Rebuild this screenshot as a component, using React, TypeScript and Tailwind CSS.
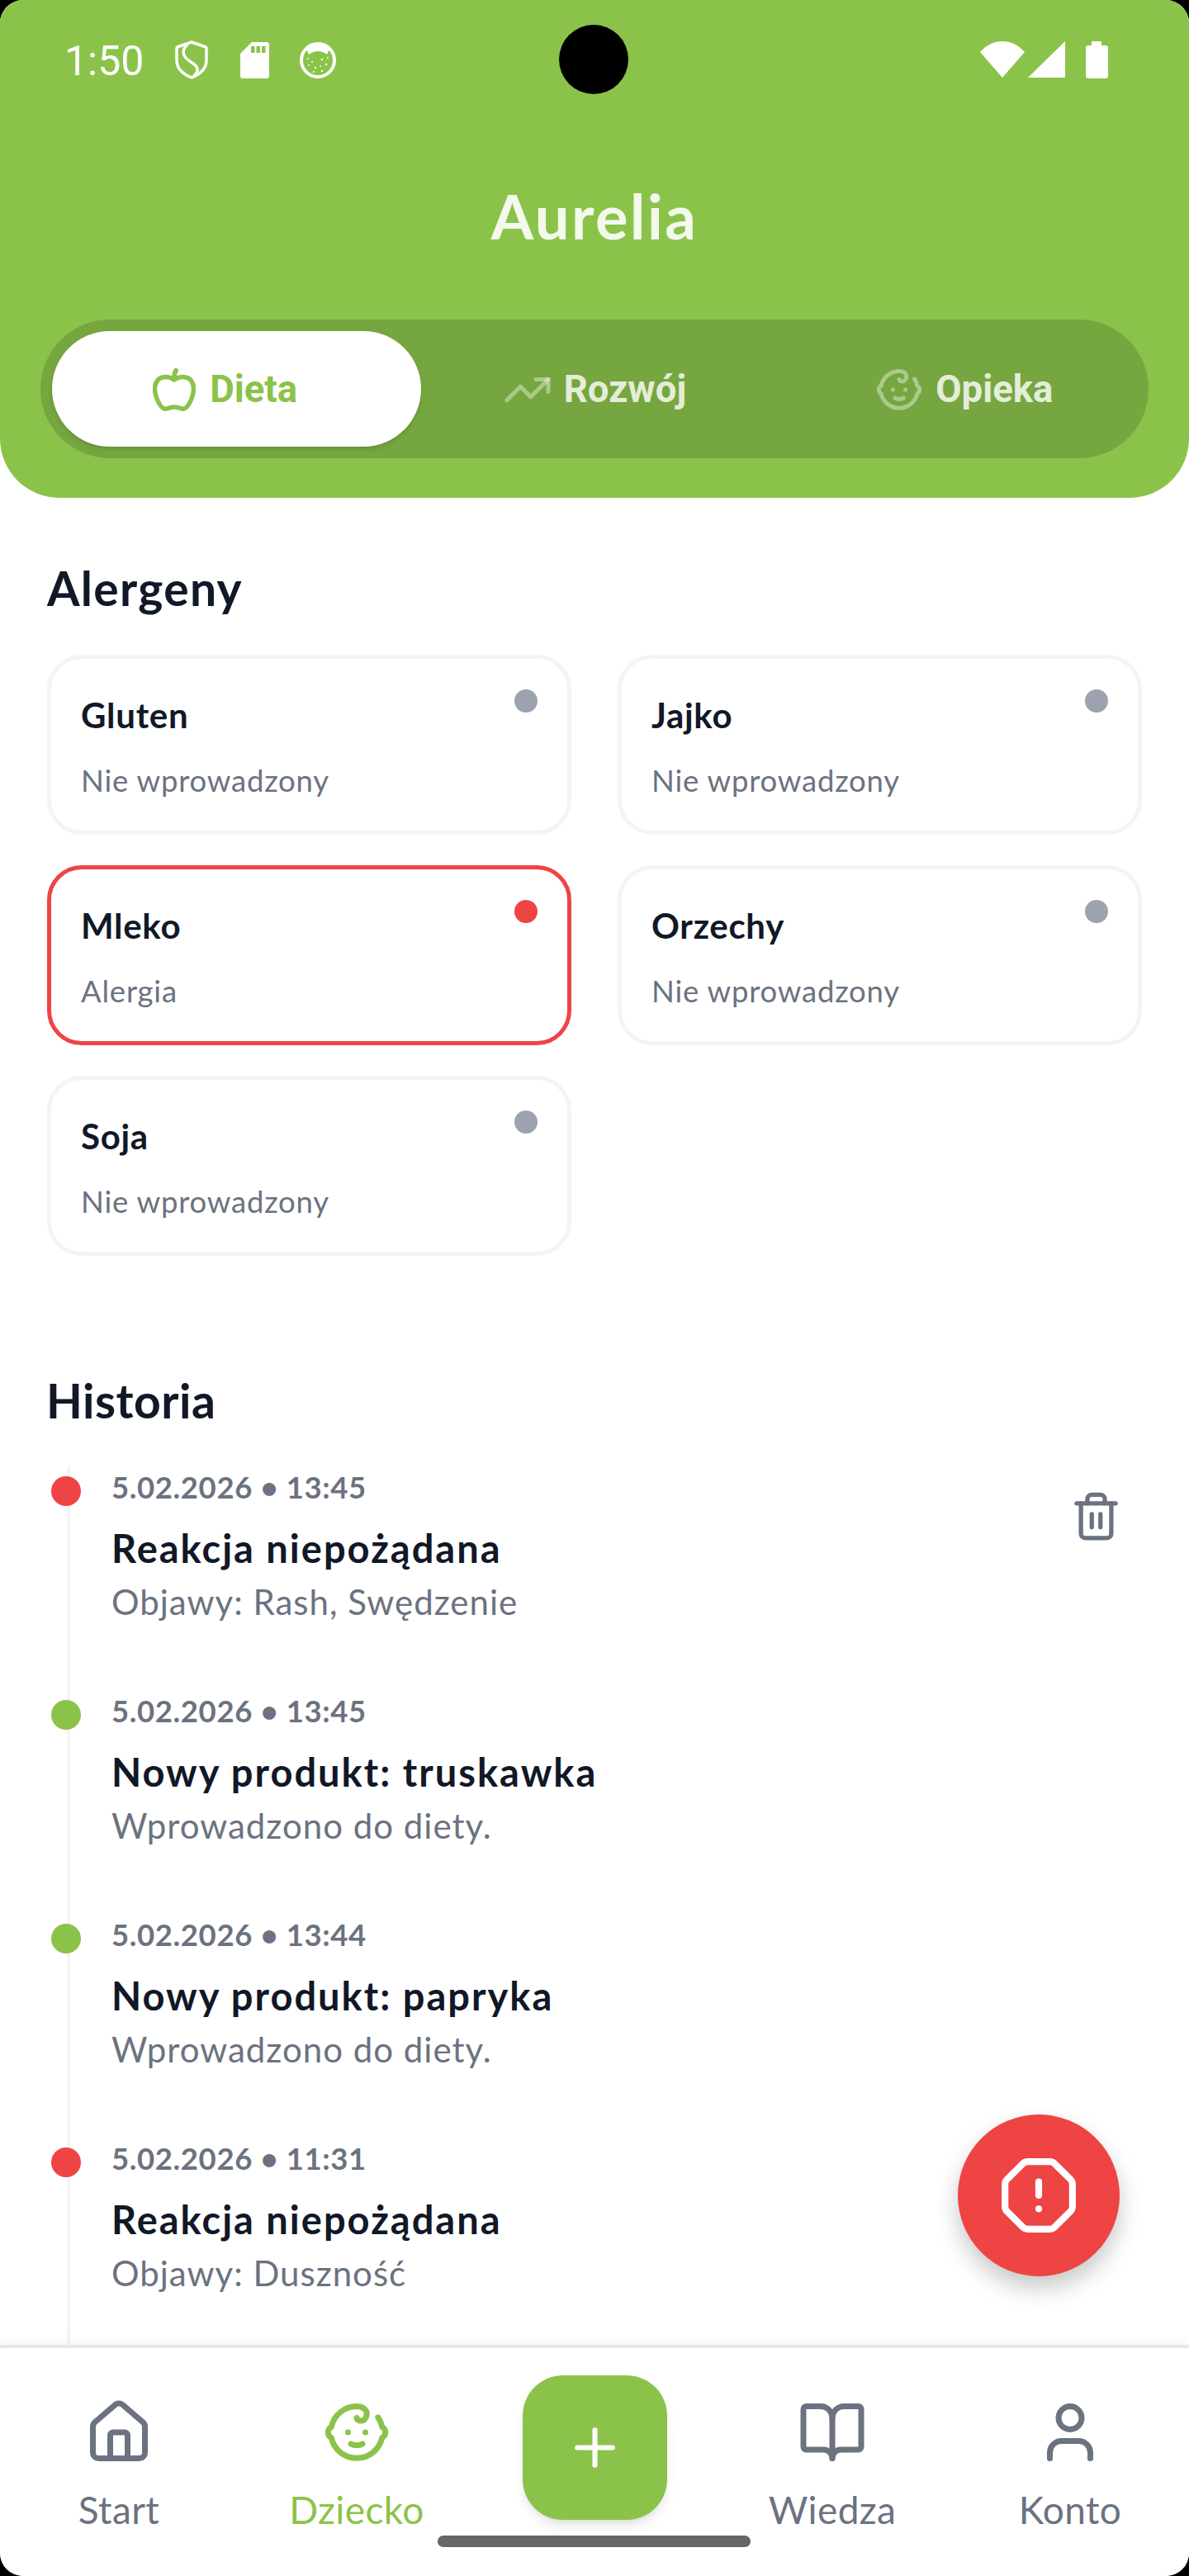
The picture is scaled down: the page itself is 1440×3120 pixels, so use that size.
import { Baby, BookOpen, House, OctagonAlert, Plus, Trash2, TrendingUp, User } from "lucide-react";

const allergens = [
  { name: "Gluten", status: "Nie wprowadzony", alert: false },
  { name: "Jajko", status: "Nie wprowadzony", alert: false },
  { name: "Mleko", status: "Alergia", alert: true },
  { name: "Orzechy", status: "Nie wprowadzony", alert: false },
  { name: "Soja", status: "Nie wprowadzony", alert: false },
];

const history = [
  { date: "5.02.2026 • 13:45", title: "Reakcja niepożądana", text: "Objawy: Rash, Swędzenie", alert: true },
  { date: "5.02.2026 • 13:45", title: "Nowy produkt: truskawka", text: "Wprowadzono do diety.", alert: false },
  { date: "5.02.2026 • 13:44", title: "Nowy produkt: papryka", text: "Wprowadzono do diety.", alert: false },
  { date: "5.02.2026 • 11:31", title: "Reakcja niepożądana", text: "Objawy: Duszność", alert: true },
];

function StatusBar() {
  return (
    <div className="flex h-[144px] items-start pl-[78px] pr-[98px] pt-[49px] text-white">
      <span className="w-[134px] font-['Roboto'] text-[50px] leading-[50px]">1:50</span>
      <svg width="40" height="47" viewBox="0 0 40 47" fill="none" stroke="white" strokeWidth="3.5" strokeLinecap="round" strokeLinejoin="round">
        <path d="M20 2 L36 7.5 Q38 8 38 10 V24 C38 34 30 41 20 45 C10 41 2 34 2 24 V10 Q2 8 4 7.5 Z" />
        <path d="M15 5 C9 10 8 17 15 23 C21 28 28 30 27 37 C26.5 39 25 41 23 43" />
      </svg>
      <svg className="ml-[39px] mt-[2px]" width="35" height="44" viewBox="0 0 35 44">
        <path fill="white" d="M14 0 H32 Q35 0 35 3 V41 Q35 44 32 44 H3 Q0 44 0 41 V14 Z" />
        <rect x="13" y="5" width="4.5" height="8" fill="#8BC34A" />
        <rect x="19.5" y="5" width="4.5" height="8" fill="#8BC34A" />
        <rect x="26" y="5" width="4.5" height="8" fill="#8BC34A" />
      </svg>
      <svg className="ml-[37px] mt-[2px]" width="44" height="44" viewBox="0 0 44 44" fill="none">
        <circle cx="22" cy="22" r="20" stroke="white" strokeWidth="4" />
        <path fill="white" d="M8 8 Q22 -4 36 8 L33 15 L30 13 Q22 9 14 13 L11 15 Z" />
        <g fill="white">
          <circle cx="10" cy="20" r="1" />
          <circle cx="15" cy="24" r="1" />
          <circle cx="27" cy="21" r="1.3" />
          <circle cx="34" cy="19" r="1" />
          <circle cx="11" cy="28" r="1" />
          <circle cx="19" cy="31" r="1.2" />
          <circle cx="25" cy="29" r="1" />
          <circle cx="32" cy="27" r="1.3" />
          <circle cx="17" cy="36" r="1" />
          <circle cx="27" cy="35" r="1.2" />
        </g>
      </svg>
      <div className="ml-auto flex items-start pt-px">
        <svg width="54" height="44" viewBox="0 0 54 44">
          <path fill="white" d="M0 13 Q11 0 27 0 Q43 0 54 13 L27 44 Z" />
        </svg>
        <svg className="ml-[4px]" width="45" height="44" viewBox="0 0 45 44">
          <path fill="white" d="M0 44 L45 0 V44 Z" />
        </svg>
        <svg className="ml-[25px]" width="27" height="45" viewBox="0 0 27 45">
          <path fill="white" d="M7 0 H19 V5 H24 Q27 5 27 8 V42 Q27 45 24 45 H3 Q0 45 0 42 V8 Q0 5 3 5 H7 Z" />
        </svg>
      </div>
    </div>
  );
}

function AppleIcon() {
  return (
    <svg width="52" height="52" viewBox="0 0 52 52" fill="none" stroke="#8BC34A" strokeWidth="5.5" strokeLinecap="round" strokeLinejoin="round">
      <path d="M26 14 C30 11 36 10 40 11 C46 12 49.5 18 49.5 25 C49.5 33 44 47 38 49 C34 50 31 47 26 47 C21 47 18 50 14 49 C8 47 2.5 33 2.5 25 C2.5 18 6 12 12 11 C16 10 22 11 26 14 Z" />
      <path d="M26 13 C26 9 26.5 5 28 3" strokeWidth="6" />
    </svg>
  );
}

function Tabs() {
  return (
    <div className="relative mx-[49px] grid h-[168px] grid-cols-3 rounded-full bg-[#76A63F] font-['Roboto'] text-[45.5px] font-bold">
      <div className="absolute bottom-[14px] left-[14px] top-[14px] w-[447px] rounded-full bg-white shadow-md" />
      <div className="relative flex items-center justify-center gap-[17px] pt-[2px] text-[#8BC34A]">
        <AppleIcon />
        <span>Dieta</span>
      </div>
      <div className="flex items-center justify-center gap-[14px] pt-[2px] text-white/80">
        <TrendingUp size={60} strokeWidth={2} className="text-white/40" />
        <span>Rozwój</span>
      </div>
      <div className="flex items-center justify-center gap-[14px] pt-[2px] text-white/80">
        <Baby size={60} strokeWidth={2} className="text-white/40" />
        <span>Opieka</span>
      </div>
    </div>
  );
}

function AllergenCard({ name, status, alert }: { name: string; status: string; alert: boolean }) {
  return (
    <div className={`flex h-[218px] items-start justify-between rounded-[42px] border-[5px] bg-white pl-[36px] pr-[36px] pt-[37px] ${alert ? "border-[#EF4444]" : "border-[#F3F4F6]"}`}>
      <div>
        <div className="mt-[3px] text-[42px] font-bold leading-[56px] tracking-[0.7px] text-[#111827]">{name}</div>
        <div className="mt-[26px] text-[36.5px] leading-[50px] tracking-[0.8px] text-[#6B7280]">{status}</div>
      </div>
      <div className={`size-[28px] rounded-full ${alert ? "bg-[#EF4444]" : "bg-[#9CA3AF]"}`} />
    </div>
  );
}

function HistoryItem({ date, title, text, alert, trash }: { date: string; title: string; text: string; alert: boolean; trash: boolean }) {
  return (
    <div className="relative h-[271px]">
      <div className={`absolute left-[-73px] top-[12px] size-[36px] rounded-full ${alert ? "bg-[#EF4444]" : "bg-[#8BC34A]"}`} />
      <div className="text-[36.5px] font-bold leading-[50px] tracking-[0.6px] text-[#6B7280]">{date}</div>
      <div className="mt-[18px] text-[47px] font-bold leading-[62px] tracking-[2px] text-[#111827]">{title}</div>
      <div className="mt-[6px] text-[42px] leading-[56px] tracking-[1px] text-[#6B7280]">{text}</div>
      {trash && <Trash2 size={63} strokeWidth={2} className="absolute right-[81px] top-[29px] text-[#6B7280]" />}
    </div>
  );
}

function NavItem({ icon, label, active }: { icon: React.ReactNode; label: string; active?: boolean }) {
  return (
    <div className={`flex flex-col items-center pt-[60px] ${active ? "text-[#8BC34A]" : "text-[#6B7280]"}`}>
      {icon}
      <span className="mt-[21px] text-[46px] leading-[62px] tracking-[0.4px]">{label}</span>
    </div>
  );
}

export default function App() {
  return (
    <div className="h-[3120px] w-[1440px] overflow-hidden bg-black font-['Lato',sans-serif]">
      <div className="relative flex h-full flex-col overflow-hidden rounded-[28px] bg-white">
        <header className="flex h-[603px] shrink-0 flex-col rounded-b-[72px] bg-[#8BC34A]">
          <StatusBar />
          <h1 className="mt-[68px] text-center text-[74px] font-bold leading-[100px] tracking-[2.5px] text-white/90">Aurelia</h1>
          <div className="mt-[75px]">
            <Tabs />
          </div>
        </header>

        <main className="min-h-0 flex-1 overflow-hidden">
          <section className="px-[57px] pt-[71px]">
            <h2 className="text-[57px] font-bold leading-[76px] tracking-[1.3px] text-[#111827]">Alergeny</h2>
            <div className="mt-[43px] grid grid-cols-2 gap-x-[56px] gap-y-[37px]">
              {allergens.map((a) => (
                <AllergenCard key={a.name} {...a} />
              ))}
            </div>
          </section>

          <section className="pt-[137px]">
            <h2 className="pl-[56px] text-[57px] font-bold leading-[76px] tracking-[0.5px] text-[#111827]">Historia</h2>
            <div className="ml-[81px] mt-[42px] border-l-[4px] border-[#F3F4F6] pl-[50px]">
              {history.map((h, i) => (
                <HistoryItem key={i} {...h} trash={i === 0} />
              ))}
            </div>
          </section>
        </main>

        <nav className="relative grid h-[280px] shrink-0 grid-cols-5 border-t-[4px] border-[#E5E7EB] bg-white shadow-[0_-4px_12px_rgba(0,0,0,0.04)]">
          <NavItem icon={<House size={84} strokeWidth={2} />} label="Start" />
          <NavItem icon={<Baby size={84} strokeWidth={2} />} label="Dziecko" active />
          <div className="flex justify-center pt-[33px]">
            <button className="flex size-[175px] items-center justify-center rounded-[49px] bg-[#8BC34A] text-white shadow-lg">
              <Plus size={73} strokeWidth={2} />
            </button>
          </div>
          <NavItem icon={<BookOpen size={84} strokeWidth={2} />} label="Wiedza" />
          <NavItem icon={<User size={84} strokeWidth={2} />} label="Konto" />
          <div className="absolute bottom-[35px] left-[530px] h-[14px] w-[379px] rounded-full bg-[#666666]" />
        </nav>

        {/* camera cutout */}
        <div className="absolute left-[677px] top-[30px] size-[84px] rounded-full bg-black" />

        <button className="absolute left-[1160px] top-[2561px] flex size-[196px] items-center justify-center rounded-full bg-[#EF4444] text-white shadow-[0_14px_28px_rgba(0,0,0,0.22)]">
          <OctagonAlert size={98} strokeWidth={2} />
        </button>
      </div>
    </div>
  );
}
